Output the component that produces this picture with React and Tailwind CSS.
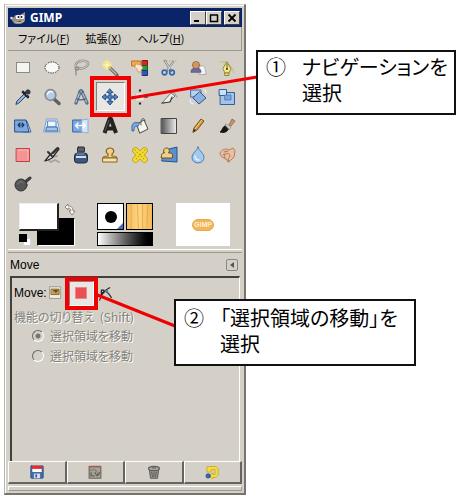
import React, { useState } from 'react';

const Icon = ({ children, size = 18 }) => (
  <svg width={size} height={size} viewBox="0 0 18 18" fill="none" strokeLinejoin="round" strokeLinecap="round" aria-hidden="true">
    {children}
  </svg>
);

const tools = [
  { name: 'Rectangle Select', icon: <rect x="2.5" y="3.5" width="13" height="10" fill="#f4f4f0" stroke="#333" strokeLinecap="butt" strokeDasharray="1 1" /> },
  { name: 'Ellipse Select', icon: <ellipse cx="9" cy="8.5" rx="7" ry="5.5" fill="#f8f8f4" stroke="#333" strokeLinecap="butt" strokeDasharray="1.5 1" /> },
  {
    name: 'Free Select',
    icon: (
      <>
        <path d="M6 10C2 9 3 3 9 2c6-1 9 2 6 5-2 2-5 3-8 2" stroke="#8f8d86" strokeWidth="2.4" />
        <path d="M6 10C2 9 3 3 9 2c6-1 9 2 6 5-2 2-5 3-8 2" stroke="#d9d7d0" strokeWidth="1" />
        <path d="M6 8c-3 0-4 3-1 3 2 0 2-2 1-3M4 11c-1 2 1 3 0 5" stroke="#8f8d86" strokeWidth="1.3" />
      </>
    ),
  },
  {
    name: 'Fuzzy Select',
    icon: (
      <>
        <path d="M9 9l7 7" stroke="#6c6a64" strokeWidth="3.2" />
        <path d="M9 9l6 6" stroke="#b9b7b0" strokeWidth="1.4" />
        <circle cx="6" cy="6" r="4.5" fill="#fff27a" opacity="0.6" />
        <path d="M6 1l1 4 4 1-4 1-1 4-1-4-4-1 4-1z" fill="#fffbc8" stroke="#f2e470" strokeWidth="0.5" />
      </>
    ),
  },
  {
    name: 'Select by Color',
    icon: (
      <>
        <rect x="1" y="2" width="9" height="5" fill="#f4a94e" stroke="#bb7220" />
        <rect x="11.5" y="1.5" width="5" height="5" fill="#e02222" stroke="#801515" />
        <rect x="11.5" y="6.5" width="5" height="5" fill="#2c9c36" stroke="#17601d" />
        <rect x="11.5" y="11.5" width="5" height="5" fill="#2c59b8" stroke="#17366f" />
        <path d="M5 5l5 1 2 3-2 2 0 2H7l-1-3-2-2z" fill="#fbe3cd" stroke="#c98a5c" strokeWidth="0.7" />
      </>
    ),
  },
  {
    name: 'Scissors Select',
    icon: (
      <>
        <path d="M3 2h14" stroke="#c9a54c" strokeLinecap="butt" strokeDasharray="1.5 1.5" />
        <path d="M5 2l6 10M13 3l-6 9" stroke="#7a7f86" strokeWidth="2.2" />
        <path d="M5 2l5 8M13 3l-5 8" stroke="#e4e8ee" strokeWidth="0.9" />
        <circle cx="4.5" cy="13.5" r="2.3" stroke="#3468ad" strokeWidth="1.7" />
        <circle cx="12" cy="13.5" r="2.3" stroke="#3468ad" strokeWidth="1.7" />
      </>
    ),
  },
  {
    name: 'Foreground Select',
    icon: (
      <>
        <path d="M10 15V9c0-3 6-3 6 0l1 6z" fill="#f4f4f4" stroke="#9b9b9b" strokeWidth="0.7" />
        <path d="M2 13c0-3 2-4 5-4s5 1 5 4z" fill="#6f689f" stroke="#4b457b" strokeWidth="0.7" />
        <circle cx="7" cy="6" r="3.6" fill="#cf9860" stroke="#8d5d30" strokeWidth="0.7" />
      </>
    ),
  },
  {
    name: 'Paths',
    icon: (
      <>
        <path d="M2 3c7-2 12 4 14 11" stroke="#cdb873" strokeWidth="1" />
        <path d="M9 3l4 7-2 4H7l-2-4z" fill="#f6e98c" stroke="#97863a" />
        <path d="M9 5v5" stroke="#6d5d1d" />
        <circle cx="9" cy="10" r="1" fill="#4d4010" />
        <rect x="7" y="14" width="4" height="2.5" fill="#e5d26a" stroke="#8c7828" strokeWidth="0.8" />
      </>
    ),
  },
  {
    name: 'Color Picker',
    icon: (
      <>
        <path d="M2 16l1-3 7-7 2 2-7 7z" fill="#8fb7e5" stroke="#33455d" />
        <path d="M9 4l5 5M11 6l3-3" stroke="#23262c" strokeWidth="2.6" />
        <circle cx="14" cy="4" r="2.5" fill="#343b48" />
      </>
    ),
  },
  {
    name: 'Zoom',
    icon: (
      <>
        <path d="M11 11l5 4.500" stroke="#5c5f64" strokeWidth="3.400" />
        <circle cx="7.5" cy="7" r="5.3" fill="#b3cdea" stroke="#85898f" strokeWidth="1.700" />
        <path d="M4.500 6c1-3 4-3 5-2" stroke="#fff" strokeWidth="1.300" />
      </>
    ),
  },
  {
    name: 'Measure',
    icon: (
      <>
        <path d="M8 4L4 15M10 4l5 11" stroke="#5d708a" strokeWidth="3.400" />
        <path d="M8 4L4 14M10 4l4.500 10" stroke="#b2c2d6" strokeWidth="1.200" />
        <path d="M5 11c2 1 6 1 8 0" stroke="#4d6484" strokeWidth="1.600" />
        <circle cx="9" cy="3.500" r="2" fill="#8499b4" stroke="#4e6078" />
      </>
    ),
  },
  {
    name: 'Move',
    icon: <path d="M9 1l3 3.500h-2V8h3.500V6L17 9l-3.500 3v-2H10v3.500h2L9 17l-3-3.500h2V10H4.500v2L1 9l3.500-3v2H8V4.500H6z" fill="#5583c0" stroke="#234b83" strokeWidth="0.900" />,
  },
  {
    name: 'Alignment',
    icon: (
      <>
        <path d="M9 1.500v2M9 14.500v2" stroke="#222" strokeWidth="2.200" strokeLinecap="butt" />
        <path d="M2 9h3M13 9h3" stroke="#5c5c5c" strokeWidth="2" />
        <rect x="5" y="5" width="8" height="8" fill="#e9e8e2" stroke="#c2c0b8" strokeWidth="0.600" />
      </>
    ),
  },
  {
    name: 'Crop',
    icon: (
      <>
        <path d="M2 15l9-10 4 3-6 6z" fill="#eeeeea" stroke="#777" />
        <path d="M2 15l8-1 2-5" stroke="#444" strokeWidth="1.200" />
        <path d="M11 5l2-2 4 6" stroke="#9a9c9e" strokeWidth="1.200" />
      </>
    ),
  },
  {
    name: 'Rotate',
    icon: (
      <>
        <rect x="2" y="2" width="10" height="7" fill="#b9d1ed" stroke="#3e6fae" />
        <path d="M11 4l6 6-7 6-6-6z" fill="#8ab1e0" stroke="#2a5799" />
        <path d="M15 2c1 0 2 1 2 3M1 12c0 2 1 3 3 4" stroke="#eef3f9" strokeWidth="1.200" />
      </>
    ),
  },
  {
    name: 'Scale',
    icon: (
      <>
        <rect x="2.500" y="4.500" width="14" height="12" fill="#a3c3e8" stroke="#2e609f" />
        <rect x="1.500" y="1.500" width="7" height="6" fill="#cfe0f4" stroke="#2e609f" />
        <path d="M7 7h6v5H7z" fill="#7ba6da" stroke="#3d70b0" strokeWidth="0.700" />
      </>
    ),
  },
  {
    name: 'Shear',
    icon: (
      <>
        <path d="M7 4h6l4 11H9z" fill="#e3e5e5" stroke="#3f6ca6" />
        <path d="M1 3h11l3 12H1z" fill="#80a9db" stroke="#264f8c" />
        <path d="M4 8h6M6 6L4 8l2 2M8 6l2 2-2 2" stroke="#163868" strokeWidth="1.100" />
      </>
    ),
  },
  {
    name: 'Perspective',
    icon: (
      <>
        <path d="M4 2h10l3 13H1z" fill="#dbe8f7" stroke="#7fa3ce" />
        <path d="M5 4h8v6H5z" fill="#f0f6fd" stroke="#5b88bf" />
        <path d="M4 10h10l1 4H3z" fill="#a3c3e8" stroke="#3b6eae" />
      </>
    ),
  },
  {
    name: 'Flip',
    icon: (
      <>
        <rect x="1" y="3" width="9" height="12" fill="#7ca9df" stroke="#3568a8" />
        <path d="M10 3l6-1v14l-6-1z" fill="#d5e5f7" stroke="#8db0da" />
        <path d="M4 8.500h9M6 6L3.500 8.500 6 11M11 6l2.500 2.500L11 11" stroke="#fff" strokeWidth="1.400" />
      </>
    ),
  },
  {
    name: 'Text',
    icon: (
      <>
        <path d="M3.500 16L8.500 2h1.500l5 14M6 11.500h7" stroke="#222" strokeWidth="4" strokeLinecap="butt" />
        <path d="M4 14l4-11" stroke="#666" strokeWidth="0.800" />
      </>
    ),
  },
  {
    name: 'Bucket Fill',
    icon: (
      <>
        <path d="M6 7l7-4 4 9-8 4z" fill="#f4f4f1" stroke="#4b4b4b" />
        <path d="M10 8c-1-6 3-9 4-4" stroke="#555" />
        <path d="M8 6C3 4 0 6 1 14h2c0-4 1-5 4-5z" fill="#77a6dd" stroke="#2f5d98" strokeWidth="0.800" />
      </>
    ),
  },
  {
    name: 'Blend',
    icon: (
      <>
        <defs>
          <linearGradient id="blend">
            <stop stopColor="#555" />
            <stop offset="1" stopColor="#eee" />
          </linearGradient>
        </defs>
        <rect x="1.500" y="1.500" width="15" height="15" fill="url(#blend)" stroke="#444" />
      </>
    ),
  },
  {
    name: 'Pencil',
    icon: (
      <>
        <path d="M4 15l1-4 7-9 3 2-7 9z" fill="#d99a3d" stroke="#7b4c14" />
        <path d="M6 12l7-9" stroke="#f4c87d" />
        <path d="M4 15l1-3 2 1z" fill="#222" />
      </>
    ),
  },
  {
    name: 'Paintbrush',
    icon: (
      <>
        <path d="M11 8l3-6 3 2-4 5z" fill="#c99467" stroke="#8f6642" strokeWidth="0.800" />
        <path d="M8 7l5 3-2 3-4-3z" fill="#d3d5d8" stroke="#888" strokeWidth="0.700" />
        <path d="M7 9c-3 1-2 4-5 6 4 1 8 0 8-3z" fill="#161616" stroke="#161616" />
      </>
    ),
  },
  {
    name: 'Eraser',
    icon: (
      <>
        <rect x="2.500" y="2.500" width="13" height="13" fill="#f49494" stroke="#c44040" />
        <path d="M4 4h10v9" stroke="#ffb4b4" />
      </>
    ),
  },
  {
    name: 'Airbrush',
    icon: (
      <>
        <path d="M4 13l4 3 4-2 4 2M9 11l5-1" stroke="#a5a39c" strokeWidth="1.800" />
        <path d="M2 15l4-5L14 2l2 1-7 9-4 2z" fill="#e8e8e8" stroke="#292929" strokeWidth="1.300" />
        <path d="M10 7l5-5M5 6l4 4" stroke="#303030" strokeWidth="2" />
      </>
    ),
  },
  {
    name: 'Ink',
    icon: (
      <>
        <rect x="5.500" y="1" width="7" height="5" rx="1" fill="#5b5e66" stroke="#2c2e33" />
        <rect x="2.500" y="7" width="13" height="10" rx="3" fill="#3b5780" stroke="#1e2c42" />
        <path d="M4 10h10v2H4z" fill="#cfe0f3" />
        <path d="M5 8h7" stroke="#8ca3c3" />
      </>
    ),
  },
  {
    name: 'Clone',
    icon: (
      <>
        <path d="M2 12c0-2 2-2 5-2V8c-3-2-2-6 2-6s5 4 2 6v2c3 0 5 0 5 2z" fill="#edd08a" stroke="#8c6317" strokeWidth="1.200" />
        <rect x="2" y="12" width="14" height="4" fill="#f3e2b8" stroke="#8c6317" />
      </>
    ),
  },
  {
    name: 'Heal',
    icon: (
      <>
        <path d="M4.500 4.500l9 9M13.500 4.500l-9 9" stroke="#bf9e0d" strokeWidth="6.500" />
        <path d="M4.500 4.500l9 9M13.500 4.500l-9 9" stroke="#f5dc35" strokeWidth="5" />
        <path d="M4 4l10 10M14 4L4 14" stroke="#c29e12" strokeWidth="1.200" strokeDasharray="0.5 2.500" />
      </>
    ),
  },
  {
    name: 'Perspective Clone',
    icon: (
      <>
        <path d="M5 4l12-3v15l-15-1z" fill="#5c91d0" stroke="#23528e" />
        <path d="M1.500 9c0-2 2-2 3-2-2-3 0-5 2-5s4 2 2 5c2 0 4 0 4 2v3h-11z" fill="#edd08a" stroke="#76510f" />
      </>
    ),
  },
  {
    name: 'Blur',
    icon: (
      <>
        <path d="M9 1c1 4 6 6 6 10.500a6 5.500 0 0 1-12 0C3 7 8 5 9 1z" fill="#a4c9ee" stroke="#4b7cb4" />
        <path d="M6 10c0 3 2 4 4 4" stroke="#e9f4ff" strokeWidth="1.500" />
      </>
    ),
  },
  {
    name: 'Smudge',
    icon: (
      <>
        <path d="M2 7c2-4 6-5 9-3l4-2 2 3-1 6-3 3-3 2-2-3-4-2z" fill="#eac0a1" stroke="#b07f5c" />
        <path d="M7 12c-2-3 2-6 4-4s0 4-1 5l1 3M6 6l4-1M5 9l2-1" stroke="#ab7550" />
      </>
    ),
  },
  {
    name: 'Dodge / Burn',
    icon: (
      <>
        <path d="M10 8l6-5" stroke="#3d3d3d" strokeWidth="3" />
        <circle cx="7" cy="10" r="6" fill="#555" stroke="#333" />
        <path d="M4 9c1-3 4-3 5-1" stroke="#888" />
      </>
    ),
  },
];

const menus = [
  { label: 'ファイル', key: 'F' },
  { label: '拡張', key: 'X' },
  { label: 'ヘルプ', key: 'H' },
];

const footerButtons = [
  {
    name: 'Save options',
    icon: (
      <>
        <rect x="1" y="1" width="16" height="16" rx="1" fill="#3d6caa" stroke="#28497a" />
        <rect x="3" y="1" width="12" height="8" fill="#fff" />
        <rect x="2" y="1" width="14" height="4" fill="#e32c2c" />
        <rect x="5" y="11" width="8" height="6" fill="#d8dce2" />
        <rect x="7" y="12" width="2" height="4" fill="#34568a" />
      </>
    ),
  },
  {
    name: 'Restore options',
    icon: (
      <>
        <rect x="1.500" y="2" width="15" height="15" fill="#a7a39b" stroke="#6a6862" strokeWidth="1.500" />
        <path d="M2 2h14" stroke="#a85c58" strokeWidth="2" />
        <path d="M4 7c5-2 8 1 8 6M9 10l3 4 3-4M4 10v4h4" stroke="#65655f" strokeWidth="1.800" />
        <path d="M5 7c4-1 6 1 6 4" stroke="#ccc28a" />
      </>
    ),
  },
  {
    name: 'Delete options',
    icon: (
      <>
        <path d="M3 6h12l-1.500 11h-9z" fill="#999791" stroke="#5d5c58" strokeWidth="1.300" />
        <ellipse cx="9" cy="4.500" rx="7" ry="2.800" fill="#aaa8a2" stroke="#5d5c58" strokeWidth="1.500" />
        <path d="M6 9l1 6M9 9v6M12 9l-1 6M7 4h4" stroke="#5d5c58" strokeWidth="1.300" />
      </>
    ),
  },
  {
    name: 'Reset options',
    icon: (
      <>
        <path d="M3 2h11l3 3v8l-3 3h-4v2l-5-4 5-4v2h3V6H8v3H3z" fill="#f5de45" stroke="#cfab22" strokeWidth="1.200" />
        <circle cx="4" cy="14" r="2.800" fill="#376bb5" stroke="#234c86" />
      </>
    ),
  },
];

const WindowButton = ({ label, children }) => (
  <button
    aria-label={label}
    className="flex h-[14px] w-4 items-center justify-center border border-t-white border-r-[#404040] border-b-[#404040] border-l-white bg-[#d4d0c8]"
  >
    <svg width="10" height="10" viewBox="0 0 10 10" fill="none" stroke="#000" strokeWidth="2">
      {children}
    </svg>
  </button>
);

const TitleBar = () => (
  <div className="flex h-[19px] items-center bg-[#0a246a] pr-0.5 pl-0.5">
    <svg width="16" height="14" viewBox="0 0 16 14" aria-hidden="true">
      <path d="M1 7c2 1 3-1 4-3l2 1 3-1 5-3v6c1 4-3 6-7 6s-5-1-7-6z" fill="#9a9084" />
      <circle cx="8" cy="6" r="2.300" fill="#fff" />
      <circle cx="12" cy="6" r="2.300" fill="#fff" />
      <circle cx="8.500" cy="6" r="1" fill="#111" />
      <circle cx="11.500" cy="6" r="1" fill="#111" />
      <circle cx="1.500" cy="7" r="1.300" fill="#ddd" />
      <path d="M5 11l5 .5 4-1.500" stroke="#d9c7a8" strokeWidth="1.200" />
    </svg>
    <h1 className="ml-1 flex-1 font-['Noto_Sans',sans-serif] text-xs leading-4 font-bold text-white">GIMP</h1>
    <WindowButton label="Minimize"><path d="M1 8h5" /></WindowButton>
    <WindowButton label="Maximize"><path d="M1 2h8M1.500 2v6.500h7V2" strokeWidth="1.500" /></WindowButton>
    <span className="w-0.5" />
    <WindowButton label="Close"><path d="M1.500 1.500l7 7M8.500 1.500l-7 7" strokeWidth="1.800" /></WindowButton>
  </div>
);

const MenuBar = () => (
  <nav className="flex h-6 items-center gap-4 border-r border-b border-[#9c998f] pl-2.5 text-[11px]">
    {menus.map((menu) => (
      <button key={menu.key} className="whitespace-nowrap">
        {menu.label}(<u>{menu.key}</u>)
      </button>
    ))}
  </nav>
);

const Toolbox = ({ active, onSelect }) => (
  <div className="grid grid-cols-8 pt-0.5">
    {tools.map((tool) => (
      <button
        key={tool.name}
        aria-label={tool.name}
        aria-pressed={tool.name === active}
        onClick={() => onSelect(tool.name)}
        className={`relative flex h-[29px] items-center justify-center ${
          tool.name === active ? 'border border-t-[#808080] border-r-white border-b-white border-l-[#808080] bg-[#e9e7e3]' : ''
        }`}
      >
        <Icon>{tool.icon}</Icon>
        {tool.name === 'Move' && <span className="absolute -inset-[7px] border-4 border-[#f00000]" />}
      </button>
    ))}
  </div>
);

const Swatches = () => (
  <div className="grid grid-cols-3 justify-items-center pt-[5px] pb-[3px]">
    <div className="relative h-[43px] w-14">
      <button aria-label="Background color" className="absolute right-0 bottom-0 h-7 w-[38px] border border-r-white border-b-white bg-black" />
      <button aria-label="Foreground color" className="absolute top-0 left-0 h-7 w-10 border border-t-[#eee] border-r-2 border-b-2 border-l-[#eee] border-r-[#222] border-b-[#222] bg-white" />
      <button aria-label="Swap colors" className="absolute top-0 -right-0.5">
        <svg width="13" height="13" viewBox="0 0 13 13" fill="#fff" stroke="#88857e">
          <path d="M1 4l3-3v2c4 0 5 2 5 5h2l-3 4-3-4h2c0-2-1-3-3-3v2z" />
        </svg>
      </button>
      <button aria-label="Default colors" className="absolute bottom-0 left-0 size-3">
        <span className="absolute right-0 bottom-0 size-2 border border-gray-300 bg-white" />
        <span className="absolute top-0 left-0 size-2 bg-black" />
      </button>
    </div>
    <div className="grid h-[43px] w-14 grid-cols-2 grid-rows-[27px_14px] gap-0.5">
      <button aria-label="Brush" className="relative flex items-center justify-center border border-black bg-white">
        <span className="size-3 rounded-full bg-black" />
        <svg width="6" height="6" viewBox="0 0 6 6" className="absolute right-0 bottom-0"><path d="M6 0v6H0z" fill="#4867c3" /></svg>
      </button>
      <button aria-label="Pattern" className="border border-black bg-linear-to-r from-[#f3bd60] via-[#ffd580] to-[#f3b959]">
        <svg viewBox="0 0 24 24" className="size-full" stroke="#e3a548" preserveAspectRatio="none">
          <path d="M4 0v24M10 0l1 24M15 0v24M20 0l-1 24" strokeWidth="0.8" />
        </svg>
      </button>
      <button aria-label="Gradient" className="col-span-2 border border-black bg-linear-to-r from-white to-black" />
    </div>
    <div className="flex h-[43px] w-[54px] items-center justify-center bg-white">
      <span className="flex h-3 w-[22px] items-center justify-center rounded-md border border-[#e9a850] bg-[#f3b55b] font-['Liberation_Sans',sans-serif] text-[7px] leading-none font-bold text-[#fff0cd]">
        GIMP
      </span>
    </div>
  </div>
);

const MoveOptions = () => (
  <section className="mx-0.5 min-h-[185px] border-t-2 border-r border-l-2 border-t-[#404040] border-r-white border-l-[#404040] pl-0.5">
    <div className="flex h-[30px] items-center">
      <span className="font-['Liberation_Sans',sans-serif] text-xs">Move:</span>
      <button aria-label="Layer" className="ml-0.5">
        <Icon size={14}>
          <rect x="1" y="1" width="14" height="15" fill="#f1ede3" stroke="#8d897e" />
          <rect x="3" y="4" width="10" height="7" fill="#c99b4b" stroke="#725421" />
          <path d="M5 5h7l-3 4z" fill="#5d4a2b" />
        </Icon>
      </button>
      <button aria-label="Selection" className="relative ml-1.5 flex size-[25px] items-center justify-center border border-t-[#808080] border-r-white border-b-white border-l-[#808080] bg-[#e9e7e3]">
        <span className="size-3 border border-[#ef8585] bg-[#e94f55]" />
        <span className="absolute -inset-[5px] border-4 border-[#f00000]" />
      </button>
      <button aria-label="Path" className="ml-1">
        <Icon size={15}>
          <path d="M2 17C5 7 9 5 14 2M10 7c3 1 4 4 6 7" stroke="#333" strokeWidth="1.500" />
          <path d="M4 5v6M4 5h3v3H4" stroke="#222" strokeWidth="1.500" />
          <rect x="9" y="5" width="3" height="3" fill="#5078b4" />
        </Icon>
      </button>
    </div>
    <fieldset disabled className="text-xs text-[#85827a] [text-shadow:1px_1px_0_#fff]">
      <legend className="leading-[18px] whitespace-nowrap">機能の切り替え&nbsp; (Shift)</legend>
      {['pick', 'active'].map((mode) => (
        <label key={mode} className="flex h-5 items-center gap-1.5 pl-[18px]">
          <input
            type="radio"
            name="toggle"
            defaultChecked={mode === 'pick'}
            className="size-3 appearance-none rounded-full border border-t-[#686868] border-r-white border-b-white border-l-[#686868] bg-[#d4d0c8] checked:bg-[radial-gradient(circle,#77746d_0_2px,transparent_3px)]"
          />
          選択領域を移動
        </label>
      ))}
    </fieldset>
  </section>
);

const Callout = ({ number, className, children }) => (
  <aside className={`absolute flex border-2 border-[#111] bg-white px-2 text-xl leading-[26px] whitespace-nowrap ${className}`}>
    <span>{number}</span>
    {children}
  </aside>
);

const App = () => {
  const [activeTool, setActiveTool] = useState('Move');

  return (
    <main className="relative min-h-screen bg-white p-1 font-['Noto_Sans_CJK_JP',sans-serif] text-black [font-feature-settings:'palt']">
      <div className="w-full max-w-[242px] border border-t-[#d4d0c8] border-r-2 border-b-2 border-l-[#b5b2aa] border-r-[#77756f] border-b-[#77756f] bg-[#d4d0c8] pt-[3px] pr-[2px] pb-[2px] pl-[3px] shadow-[inset_1px_1px_0_#fff]">
        <TitleBar />
        <MenuBar />
        <Toolbox active={activeTool} onSelect={setActiveTool} />
        <Swatches />
        <div className="h-1 border-t border-b border-t-white border-b-[#9c998f]" />
        <header className="flex h-[23px] items-center justify-between pr-1 pl-0.5">
          <h2 className="font-['Liberation_Sans',sans-serif] text-xs">Move</h2>
          <button aria-label="Configure this tab" className="flex size-3 items-center justify-center rounded-xs border border-[#8a877f]">
            <svg width="6" height="6" viewBox="0 0 6 6"><path d="M5 0v6L1 3z" fill="#55534e" /></svg>
          </button>
        </header>
        <MoveOptions />
        <div className="grid grid-cols-4">
          {footerButtons.map((button) => (
            <button
              key={button.name}
              aria-label={button.name}
              className="flex h-[23px] items-center justify-center border border-t-white border-r-2 border-b-2 border-l-white border-r-[#66645e] border-b-[#66645e]"
            >
              <Icon size={14}>{button.icon}</Icon>
            </button>
          ))}
        </div>
        <div className="mt-0.5 h-[5px] border border-t-white border-r-[#9c998f] border-b-[#9c998f] border-l-white" />
      </div>

      {/* pointer lines from the callouts to the highlighted tools */}
      <svg width="458" height="500" className="pointer-events-none absolute top-0 left-0" stroke="#f00000" strokeWidth="3" aria-hidden="true">
        <path d="M131 98L257 77M95 294L175 326" />
      </svg>
      <Callout number="①" className="top-[50px] left-64 h-[65px] w-[200px] gap-4 pt-0.5">
        <p>ナビゲーションを<br />選択</p>
      </Callout>
      <Callout number="②" className="top-[299px] left-[174px] h-[67px] w-[242px] gap-4 pt-1">
        <p>「選択領域の移動」を<br />選択</p>
      </Callout>
    </main>
  );
};

export default App;
